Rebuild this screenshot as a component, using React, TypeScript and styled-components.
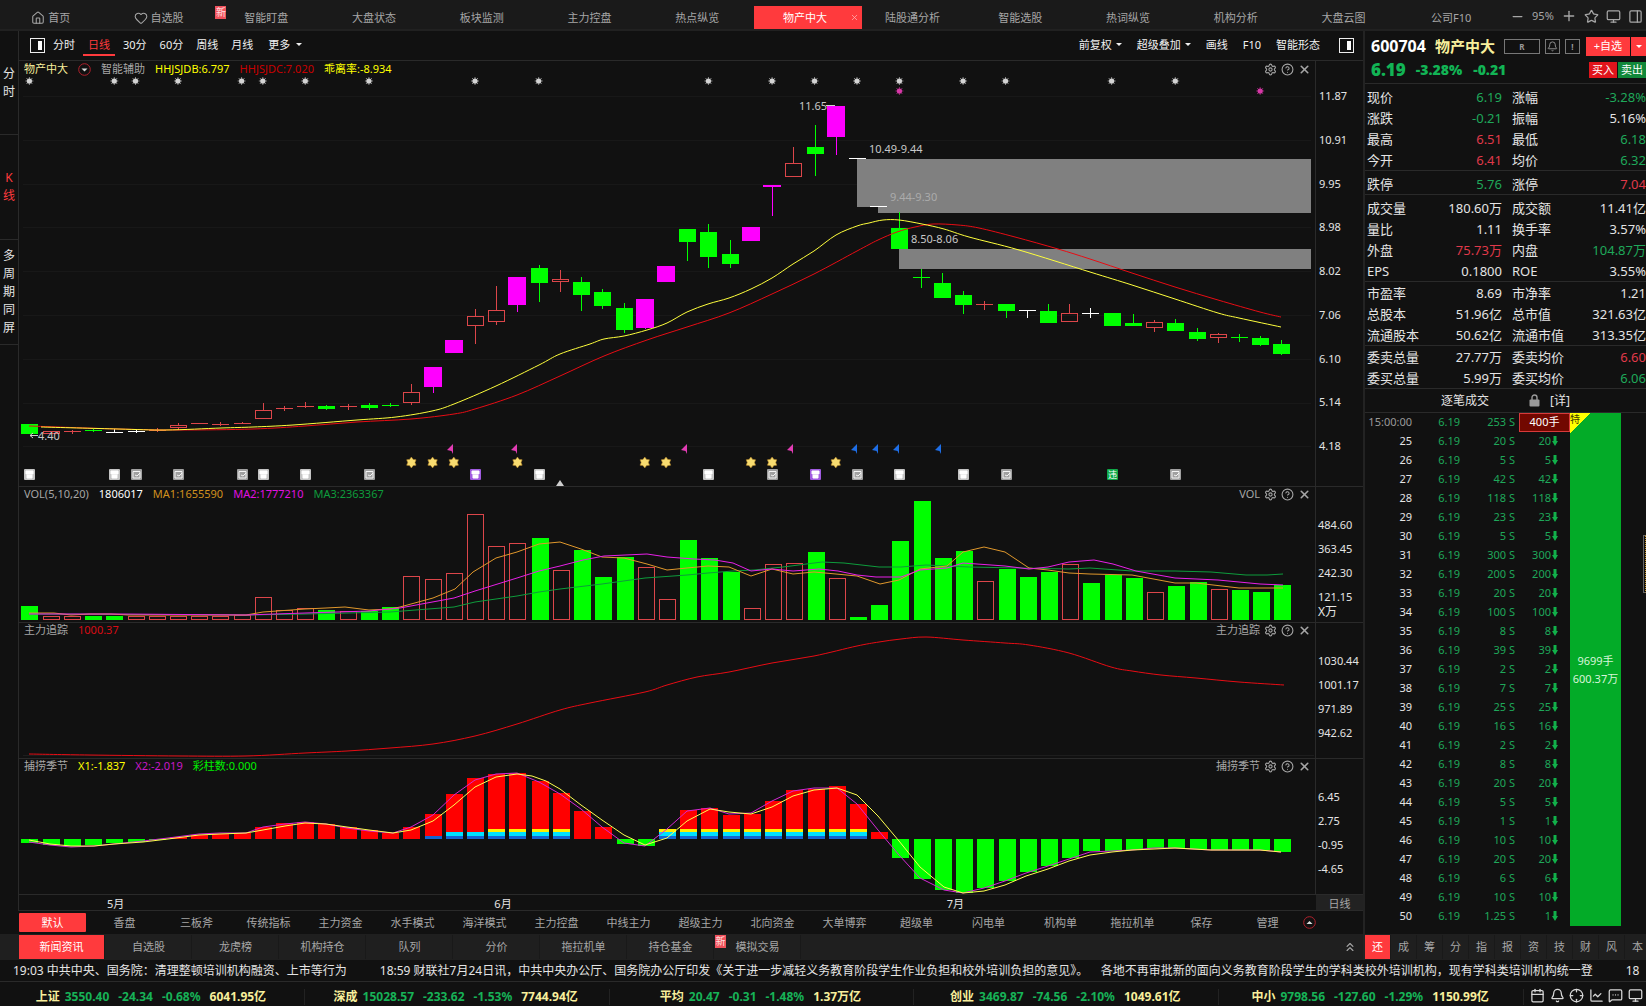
import React from "react";
import styled, { createGlobalStyle } from "styled-components";
import {
  Bell,
  Calendar,
  ChartLine,
  ChevronsUp,
  CircleHelp,
  Crosshair,
  Heart,
  House,
  MessageSquareMore,
  Minus,
  Monitor,
  PanelRight,
  Plus,
  Settings,
  Star,
  X,
} from "lucide-react";

const c = {
  bg: "#111111",
  bar: "#1f1f1f",
  line: "#2a2a2a",
  text: "#e4e4e4",
  muted: "#a6a6a6",
  accent: "#ff3a3d",
  up: "#e0394a",
  down: "#1fa85a",
  cream: "#f8ef9c",
  neon: "#00ff00",
  magenta: "#ff00ff",
  yellow: "#ffff00",
};

const sans = '"Noto Sans", "Noto Sans CJK SC", sans-serif';

const GlobalStyle = createGlobalStyle`
  *, *::before, *::after { box-sizing: border-box; }
  body { margin: 0; background: ${c.bg}; overflow: hidden; }
  button { font: inherit; color: inherit; background: none; border: 0; padding: 0; white-space: nowrap; }
  svg { display: block; flex: none; }
`;

const Page = styled.div`
  display: flex;
  flex-direction: column;
  height: 100vh;
  overflow: hidden;
  background: ${c.bg};
  color: ${c.text};
  font: 11px/14px ${sans};
`;

const TopBar = styled.header`
  display: flex;
  flex: none;
  height: 31px;
  background: #1a1a1a;
  border-bottom: 2px solid #212121;
  color: ${c.muted};
`;

const TopTabs = styled.nav`
  display: flex;
  flex: 1;
  align-items: flex-end;
`;

const TopTab = styled.button<{ $active?: boolean }>`
  position: relative;
  display: flex;
  flex: 1;
  align-items: center;
  justify-content: center;
  gap: 3px;
  height: 23px;
  padding-right: 6px;
  background: ${(p) => (p.$active ? c.accent : "none")};
  color: ${(p) => (p.$active ? "#fff" : "inherit")};
`;

const CloseMark = styled.span`
  position: absolute;
  right: 3px;
  top: 7px;
  color: #ffb3b3;
`;

const NewBadge = styled.span`
  position: absolute;
  left: 0;
  top: 0;
  width: 11px;
  height: 13px;
  background: #f0525c;
  color: #ffdcdc;
  font-size: 10px;
  line-height: 13px;
`;

const WindowTools = styled.div`
  display: flex;
  align-items: center;
  justify-content: space-between;
  width: 138px;
  padding: 3px 3px 0 2px;
`;

const Main = styled.main`
  display: flex;
  flex: 1;
  min-height: 0;
`;

const Workspace = styled.section`
  display: flex;
  flex-direction: column;
  flex: 1;
  min-width: 0;
  border-right: 2px solid #232323;
`;

const WorkArea = styled.div`
  display: flex;
  flex: 1;
  min-height: 0;
`;

const SideNav = styled.nav`
  flex: none;
  width: 19px;
  border-right: 1px solid ${c.line};
`;

const SideTab = styled.button<{ $h: number; $active?: boolean }>`
  display: block;
  width: 18px;
  height: ${(p) => p.$h}px;
  border-bottom: 1px solid ${c.line};
  font-size: 12px;
  line-height: 18px;
  white-space: pre-line;
  text-align: center;
  color: ${(p) => (p.$active ? c.accent : c.text)};
`;

const Charts = styled.div`
  display: flex;
  flex-direction: column;
  flex: 1;
  min-width: 0;
`;

const Toolbar = styled.div`
  display: flex;
  align-items: center;
  height: 30px;
  padding: 0 9px 0 11px;
  border-bottom: 1px solid ${c.line};
  color: #f0f0f0;
`;

const ToolGroup = styled.div<{ $gap: number; $end?: boolean }>`
  display: flex;
  align-items: center;
  gap: ${(p) => p.$gap}px;
  margin-left: ${(p) => (p.$end ? "auto" : "0")};
  margin-right: ${(p) => (p.$end ? "14px" : "0")};
`;

const ToolButton = styled.button<{ $active?: boolean }>`
  display: flex;
  align-items: center;
  gap: 4px;
  height: 20px;
  padding: 0 5px;
  border-bottom: 2px solid ${(p) => (p.$active ? c.accent : "transparent")};
  color: ${(p) => (p.$active ? c.accent : "inherit")};
`;

const MoreButton = styled(ToolButton)`
  gap: 6px;
  margin-left: 2px;
`;

const Caret = styled.i`
  border: 3px solid transparent;
  border-top-color: currentColor;
  border-bottom: 0;
`;

const PanelBox = styled.section<{ $h: number }>`
  display: flex;
  flex: none;
  height: ${(p) => p.$h}px;
  border-bottom: 1px solid ${c.line};
`;

const PlotSide = styled.div`
  display: flex;
  flex-direction: column;
  flex: 1;
  min-width: 0;
  border-right: 1px solid ${c.line};
`;

const Legend = styled.div<{ $main?: boolean }>`
  display: flex;
  align-items: center;
  gap: 10px;
  flex: none;
  height: 16px;
  padding: 0 4px ${(p) => (p.$main ? 0 : 2)}px 5px;
`;

const Tone = styled.span<{ $c: string }>`
  color: ${(p) => p.$c};
`;

const PanelTools = styled.div`
  display: flex;
  align-items: center;
  gap: 4px;
  margin-left: auto;
  color: ${c.muted};
`;

const Plot = styled.svg`
  width: 100%;
  flex: 1;
  min-height: 0;
  overflow: visible;
  font: 11px ${sans};
`;

const Scale = styled.div<{ $spread?: boolean }>`
  display: flex;
  flex-direction: column;
  justify-content: ${(p) => (p.$spread ? "space-between" : "flex-start")};
  flex: none;
  width: 47px;
  padding: ${(p) => (p.$spread ? "28px 0 33px 3px" : "26px 0 0 2px")};
  line-height: ${(p) => (p.$spread ? 14 : 24)}px;
`;

const Unit = styled.span`
  font-size: 12px;
  line-height: 6px;
`;

const TimeAxis = styled.div`
  display: flex;
  flex: none;
  height: 16px;
  border-bottom: 1px solid ${c.line};
  line-height: 17px;
`;

const Months = styled.div`
  display: grid;
  flex: 1;
  grid-template-columns: 88fr 387fr 452fr 369fr;
`;

const Period = styled.div`
  width: 47px;
  background: #222222;
  color: ${c.muted};
  text-align: center;
`;

const TemplateBar = styled.nav`
  display: flex;
  flex: none;
  align-items: center;
  gap: 5px;
  height: 23px;
  padding-left: 19px;
  color: ${c.muted};
`;

const TemplateTab = styled.button<{ $active?: boolean; $narrow?: boolean }>`
  flex: 0 1 ${(p) => (p.$narrow ? 61 : 67)}px;
  height: 19px;
  border-radius: 1px;
  background: ${(p) => (p.$active ? c.accent : "none")};
  color: ${(p) => (p.$active ? "#fff" : "inherit")};
`;

const InfoBar = styled.nav`
  display: flex;
  flex: none;
  align-items: center;
  gap: 1px;
  height: 26px;
  padding: 0 6px 0 19px;
  background: ${c.bar};
  color: ${c.muted};
`;

const InfoTab = styled.button<{ $active?: boolean }>`
  position: relative;
  flex: 0 1 86px;
  height: 24px;
  border-right: 1px solid #191919;
  background: ${(p) => (p.$active ? c.accent : "none")};
  color: ${(p) => (p.$active ? "#fff" : "inherit")};
`;

const PushEnd = styled.button`
  margin-left: auto;
`;

const Quote = styled.aside`
  position: relative;
  display: flex;
  flex-direction: column;
  flex: none;
  width: 281px;
`;

const QuoteHead = styled.div`
  flex: none;
  height: 53px;
  border-bottom: 1px solid ${c.line};
  padding: 3px 0 0 6px;
`;

const HeadRow = styled.div`
  display: flex;
  align-items: center;
  height: 24px;
  font-weight: 700;
  white-space: nowrap;
`;

const Code = styled.h1`
  margin: 0 9px 0 0;
  font-size: 16px;
  line-height: 20px;
  color: #fff;
`;

const StockName = styled.h2`
  margin: 0 9px 0 0;
  font-size: 15px;
  line-height: 20px;
  color: ${c.cream};
`;

const TagBox = styled.button<{ $w: number }>`
  display: flex;
  flex: none;
  align-items: center;
  justify-content: center;
  width: ${(p) => p.$w}px;
  height: 15px;
  margin-right: 5px;
  border: 1px solid #777;
  color: #999;
  font-size: 8px;
  line-height: 13px;
`;

const AddButton = styled.button<{ $w: number }>`
  display: flex;
  flex: none;
  align-items: center;
  justify-content: center;
  width: ${(p) => p.$w}px;
  height: 19px;
  margin-left: 1px;
  background: ${c.accent};
  color: #fff;
  font-weight: 400;
`;

const Price = styled.strong<{ $big?: boolean }>`
  margin-right: ${(p) => (p.$big ? 10 : 11)}px;
  font-size: ${(p) => (p.$big ? 17 : 14)}px;
  color: #12b455;
`;

const TradeButton = styled.button<{ $c: string; $first?: boolean }>`
  width: 28px;
  height: 16px;
  margin-left: ${(p) => (p.$first ? "auto" : "1px")};
  background: ${(p) => p.$c};
  color: #fff;
  font-weight: 400;
`;

const Facts = styled.dl<{ $top: number }>`
  display: grid;
  flex: none;
  grid-template-columns: 62px 73px 62px 1fr;
  grid-auto-rows: 21px;
  align-items: center;
  margin: 0;
  padding: ${(p) => p.$top}px 0 0 2px;
  border-bottom: 1px solid ${c.line};
  font-size: 13px;
  line-height: 20px;
  white-space: nowrap;
`;

const Fact = styled.dt<{ $second?: boolean }>`
  padding-left: ${(p) => (p.$second ? 10 : 0)}px;
`;

const Value = styled.dd<{ $c: string }>`
  margin: 0;
  text-align: right;
  color: ${(p) => p.$c};
`;

const DealsHead = styled.div`
  display: flex;
  align-items: center;
  gap: 10px;
  flex: none;
  height: 24px;
  padding-left: 76px;
  border-bottom: 1px solid ${c.line};
  font-size: 12px;
`;

const LockSlot = styled.span`
  margin-left: 30px;
`;

const Deals = styled.div`
  display: flex;
  flex: 1;
  align-items: flex-start;
`;

const DealTable = styled.table`
  width: 205px;
  table-layout: fixed;
  border-collapse: collapse;
  color: ${c.down};
`;

const DealCell = styled.td<{ $c?: string; $lots?: boolean }>`
  height: 19px;
  padding: 0 0 ${(p) => (p.$lots ? 0 : 2)}px 0;
  text-align: right;
  color: ${(p) => p.$c ?? "inherit"};
`;

const Lots = styled.span`
  display: flex;
  align-items: center;
  justify-content: flex-end;
  gap: 1px;
  padding: 0 12px 2px 0;
`;

const BigLot = styled.span`
  display: block;
  height: 19px;
  margin-left: 4px;
  border: 1px solid #d83a3a;
  background: #720800;
  color: #fff;
  line-height: 16px;
  text-align: center;
`;

const BlockTrade = styled.div`
  position: relative;
  display: flex;
  flex-direction: column;
  align-items: center;
  justify-content: center;
  width: 51px;
  height: 513px;
  background: #03ab28;
  color: #d7f5d9;
  line-height: 18px;
`;

const Corner = styled.span`
  position: absolute;
  left: 0;
  top: 0;
  width: 21px;
  height: 20px;
  background: linear-gradient(135deg, #ffff00 50%, transparent 50%);
  color: #3a3a00;
  font-size: 10px;
  line-height: 12px;
`;

const DrawerHandle = styled.button`
  position: absolute;
  right: 0;
  top: 504px;
  width: 3px;
  height: 58px;
  border: 1px solid #666;
  border-right: 1px dotted #c8952e;
`;

const LetterTabs = styled.nav`
  display: flex;
  flex: none;
  align-items: center;
  height: 26px;
  background: ${c.bar};
  color: ${c.muted};
`;

const LetterTab = styled.button<{ $active?: boolean }>`
  flex: 0 0 26px;
  height: 24px;
  border-right: 1px solid #191919;
  background: ${(p) => (p.$active ? c.accent : "none")};
  color: ${(p) => (p.$active ? "#fff" : "inherit")};
`;

const Ticker = styled.div`
  display: flex;
  flex: none;
  align-items: center;
  gap: 33px;
  height: 22px;
  padding-left: 13px;
  border-bottom: 1px solid ${c.line};
  font-size: 12px;
  line-height: 20px;
  white-space: pre;
`;

const StatusBar = styled.footer`
  display: flex;
  flex: none;
  align-items: center;
  height: 24px;
  padding-top: 5px;
  font-size: 12px;
  font-weight: 700;
`;

const IndexCell = styled.div`
  display: flex;
  flex: 1;
  justify-content: center;
  gap: 9px;
  height: 16px;
  padding-right: 2px;
  border-right: 1px solid #222;
  line-height: 16px;
  color: #17b257;
  white-space: nowrap;
`;

const IndexName = styled.span`
  margin-right: -4px;
  color: ${c.cream};
`;

const StatusIcons = styled.div`
  display: flex;
  justify-content: space-between;
  width: 122px;
  padding: 0 3px 2px 6px;
  color: #d8d8d8;
`;

/* ---------- chart geometry ---------- */

const PLOT_LEFT = 19;
const PLOT_WIDTH = 1296;
const xAt = (i: number) => 29.4 + i * 21.22;

type Kind = "g" | "r" | "m" | "w";
const tint: Record<Kind, string> = { g: c.neon, r: "#dc464a", m: c.magenta, w: "#ffffff" };

/* kind, high, body top, body bottom, low */
type Candle = [Kind, number, number, number, number];
const candles: Candle[] = [
  ["g", 424, 424, 434, 434], ["r", 431, 431, 433, 434], ["r", 430, 431, 431, 434], ["g", 428, 430, 430, 432],
  ["w", 429, 432, 432, 432], ["w", 430, 431, 431, 433], ["r", 428, 430, 430, 432], ["r", 423, 425, 427, 430],
  ["r", 423, 423, 423, 424], ["r", 422, 424, 424, 426], ["r", 422, 423, 423, 424], ["r", 403, 410, 418, 418],
  ["r", 406, 408, 408, 411], ["r", 402, 406, 406, 408], ["g", 405, 406, 409, 410], ["r", 404, 406, 406, 410],
  ["g", 403, 405, 408, 410], ["g", 403, 405, 405, 407], ["r", 384, 392, 402, 405], ["m", 367, 367, 387, 393],
  ["m", 340, 340, 353, 353], ["r", 309, 316, 325, 344], ["r", 286, 310, 321, 325], ["m", 277, 277, 305, 312],
  ["g", 265, 268, 283, 302], ["r", 270, 279, 281, 292], ["g", 277, 282, 295, 311], ["g", 289, 292, 306, 309],
  ["g", 303, 308, 330, 333], ["m", 299, 299, 328, 329], ["m", 266, 266, 282, 282], ["g", 229, 229, 242, 261],
  ["g", 224, 232, 257, 268], ["g", 240, 254, 264, 268], ["m", 227, 227, 241, 241], ["m", 185, 185, 187, 216],
  ["r", 147, 163, 176, 176], ["g", 125, 147, 154, 176], ["m", 106, 106, 137, 155], ["w", 158, 158, 158, 158],
  ["w", 206, 206, 206, 206], ["g", 212, 228, 249, 249], ["g", 269, 277, 277, 288], ["g", 273, 283, 298, 298],
  ["g", 291, 295, 305, 314], ["r", 301, 304, 304, 310], ["g", 304, 304, 311, 318], ["w", 310, 310, 310, 318],
  ["g", 304, 311, 323, 323], ["r", 304, 313, 321, 321], ["w", 308, 313, 313, 318], ["g", 313, 313, 326, 326],
  ["g", 314, 323, 326, 326], ["r", 320, 322, 327, 332], ["g", 319, 323, 331, 331], ["g", 328, 332, 339, 341],
  ["r", 333, 334, 337, 343], ["g", 334, 337, 337, 342], ["g", 336, 338, 345, 346], ["g", 340, 344, 354, 355],
];

const volumes: [Kind, number][] = [
  ["g", 606], ["r", 616], ["r", 616], ["g", 616], ["g", 616], ["r", 616], ["r", 616], ["r", 616], ["r", 616], ["r", 616],
  ["r", 615], ["r", 597], ["r", 610], ["r", 608], ["g", 610], ["r", 611], ["g", 611], ["g", 607], ["r", 576], ["r", 579],
  ["r", 573], ["r", 514], ["r", 546], ["r", 543], ["g", 538], ["r", 570], ["g", 550], ["g", 577], ["g", 557], ["r", 567],
  ["r", 599], ["g", 540], ["g", 558], ["g", 572], ["r", 608], ["r", 564], ["r", 563], ["g", 552], ["r", 578], ["g", 617],
  ["g", 605], ["g", 541], ["g", 501], ["g", 558], ["g", 551], ["r", 581], ["g", 569], ["g", 577], ["g", 572], ["r", 564],
  ["g", 583], ["g", 575], ["g", 578], ["r", 592], ["g", 586], ["g", 582], ["r", 589], ["g", 590], ["g", 592], ["g", 585],
];

const ZERO = 839;
const season = [
  843, 845, 846, 845, 843, 842, 840, 837, 835, 834, 833, 827, 823, 822, 824, 827, 830, 833, 827, 814,
  794, 778, 774, 773, 781, 793, 811, 827, 844, 846, 829, 810, 808, 815, 814, 801, 790, 789, 786, 804,
  832, 858, 879, 890, 893, 888, 881, 872, 866, 858, 851, 851, 850, 848, 848, 849, 850, 850, 850, 852,
];
const stripeLevel = (i: number) => {
  if (i === 19) return 1;
  if (i === 20 || i === 21) return 2;
  if ((i >= 22 && i <= 25) || (i >= 30 && i <= 39)) return 3;
  return 0;
};

const hhb = "41,427 118,429 166,430 221,428 253,427 293,425 357,420 396,417 432,411 454,404 496,386 539,365 560,354 590,344 604,339 624,336 647,330 667,323 687,312 708,304 729,298 751,289 772,278 793,264 814,251 836,235 857,226 869,223 883,220 899,220 922,224 944,229 969,237 1019,250 1090,272 1132,285 1175,299 1218,313 1239,318 1281,327";
const hhc = "29,426 118,429 179,430 253,429 305,426 357,422 411,419 454,414 475,409 517,395 560,376 604,356 647,340 687,327 729,313 772,294 814,274 857,251 878,240 897,232 915,227 933,224 958,225 979,228 1015,237 1058,249 1090,259 1132,273 1175,287 1218,300 1260,312 1281,317";
const ma5 = "29,613 54,613 71,615 89,614 111,614 129,615 246,615 263,612 305,609 326,608 345,607 369,610 390,609 400,607 433,598 455,589 473,572 496,558 517,552 539,544 560,542 581,549 602,557 624,558 647,564 667,570 687,568 708,566 729,567 751,576 772,569 793,574 814,572 836,574 857,576 880,584 899,580 920,569 947,566 963,552 984,547 1005,552 1029,568 1048,570 1069,573 1090,574 1132,575 1175,583 1196,583 1239,588 1283,588";
const ma10 = "29,614 121,614 246,615 305,613 369,611 400,608 454,598 475,591 517,578 539,571 560,566 583,560 604,556 647,554 667,557 694,559 715,560 733,563 751,571 772,569 793,571 819,569 838,571 857,575 876,577 901,577 920,570 947,568 963,563 1005,566 1029,569 1048,567 1069,562 1094,560 1113,564 1136,571 1175,578 1218,580 1260,584 1283,585";
const ma20 = "29,614 246,615 305,614 390,612 454,607 475,602 517,596 539,592 560,589 602,584 645,578 687,575 708,573 733,571 754,570 783,567 822,562 844,563 879,567 901,567 926,565 969,567 1019,568 1069,569 1090,568 1132,571 1175,571 1211,572 1246,575 1267,575 1283,574";
const track = "29,754 89,755 179,756 246,756 305,753 347,751 390,748 433,744 475,736 517,724 560,710 590,703 645,692 667,685 697,677 729,672 772,663 814,656 857,646 879,642 901,639 926,637 963,640 1005,643 1029,645 1069,653 1111,667 1132,671 1161,675 1196,678 1239,682 1284,685";
const x1 = "29,840 50,844 71,846 94,846 114,844 143,842 168,839 199,835 220,834 246,833 263,830 285,826 305,823 326,824 347,827 369,830 393,833 411,830 433,821 454,805 475,787 496,777 517,774 532,776 546,781 560,789 581,805 602,820 624,835 645,845 667,838 687,821 710,809 729,812 751,814 772,807 793,796 814,790 837,788 857,795 878,816 899,841 920,867 944,887 963,893 984,891 1005,885 1026,876 1048,869 1069,861 1090,855 1112,852 1132,850 1154,849 1175,848 1211,850 1239,850 1260,850 1281,852";
const x2 = "29,842 50,845 71,847 94,846 114,844 143,841 168,838 199,834 220,833 246,833 263,827 285,824 305,822 326,824 347,828 369,831 393,833 411,827 433,815 454,795 475,780 496,774 517,773 539,782 560,794 581,809 602,827 624,843 645,846 667,829 687,811 710,808 729,814 751,813 772,801 793,791 814,788 837,788 857,804 878,830 899,855 920,878 944,890 963,893 984,888 1005,881 1026,873 1048,866 1069,859 1090,852 1112,851 1132,850 1154,848 1175,848 1211,850 1239,850 1260,850 1281,852";

/* Catmull-Rom smoothing of a point list */
function smooth(list: string) {
  const p = list.split(" ").map((s) => s.split(",").map(Number));
  let d = `M${p[0][0]} ${p[0][1]}`;
  for (let i = 0; i < p.length - 1; i++) {
    const a = p[Math.max(0, i - 1)];
    const b = p[i];
    const e = p[i + 1];
    const f = p[Math.min(p.length - 1, i + 2)];
    d += `C${b[0] + (e[0] - a[0]) / 6} ${b[1] + (e[1] - a[1]) / 6} ${e[0] - (f[0] - b[0]) / 6} ${e[1] - (f[1] - b[1]) / 6} ${e[0]} ${e[1]}`;
  }
  return d;
}

function Curve({ points, color, straight }: { points: string; color: string; straight?: boolean }) {
  return straight ? (
    <polyline points={points} fill="none" stroke={color} />
  ) : (
    <path d={smooth(points)} fill="none" stroke={color} />
  );
}

function CandleMark({ data, i }: { data: Candle; i: number }) {
  const [kind, high, top, bottom, low] = data;
  const x = Math.round(xAt(i));
  const color = tint[kind];
  const half = kind === "m" ? 9 : 8;
  const hollow = kind === "r" && bottom > top;
  return (
    <g shapeRendering="crispEdges" stroke={color} strokeWidth="1">
      {high < top && <line x1={x + 0.5} x2={x + 0.5} y1={high} y2={top} />}
      {low > bottom && <line x1={x + 0.5} x2={x + 0.5} y1={bottom} y2={low} />}
      {bottom === top ? (
        <line x1={x - 8} x2={x + 9} y1={top + 0.5} y2={top + 0.5} />
      ) : hollow ? (
        <rect x={x - 7.5} y={top + 0.5} width={16} height={bottom - top} fill="none" />
      ) : (
        <rect x={x - half} y={top} width={half * 2 + (kind === "m" ? 0 : 1)} height={bottom - top} fill={color} stroke="none" />
      )}
    </g>
  );
}

function Spark({ i, y, color }: { i: number; y: number; color: string }) {
  const x = xAt(i);
  return (
    <g>
      <circle cx={x} cy={y} r="2.6" fill={color} />
      <path d={`M${x - 4} ${y}h8M${x} ${y - 4}v8M${x - 3} ${y - 3}l6 6M${x + 3} ${y - 3}l-6 6`} stroke={color} strokeWidth="1" opacity="0.6" />
    </g>
  );
}

function GoldStar({ i }: { i: number }) {
  const x = xAt(i);
  const pts = Array.from({ length: 12 }, (_, k) => {
    const r = k % 2 ? 3.6 : 5.4;
    const a = (Math.PI / 6) * k - Math.PI / 2;
    return `${x + r * Math.cos(a)},${462.5 + r * Math.sin(a)}`;
  }).join(" ");
  return <polygon points={pts} fill="#f8dc70" stroke="#b98a2a" strokeWidth="0.6" />;
}

function Flag({ x, color }: { x: number; color: string }) {
  return <path d={`M${x - 4} 450l6-6v10l-1.500-3z`} fill={color} />;
}

function Notice({ i, kind }: { i: number; kind: "doc" | "note" | "vip" | "breach" }) {
  const x = Math.round(xAt(i)) - 5;
  const y = 469;
  const fill = { doc: "#c4c4c4", note: "#a0a0a0", vip: "#a05be0", breach: "#10a848" }[kind];
  return (
    <g>
      <rect x={x} y={y} width="11" height="11" rx="1" fill={fill} />
      {kind === "breach" ? (
        <text x={x + 1} y={y + 9} fontSize="9" fill="#fff">违</text>
      ) : kind === "note" ? (
        <path d={`M${x + 2} ${y + 2.5}h7v6.500h-7zM${x + 4} ${y + 6}l2 1 3-3`} fill="none" stroke="#f4f4f4" />
      ) : (
        <path d={`M${x + 2} ${y + 2}h7v3h-7zM${x + 3} ${y + 6}h5v3h-5z`} fill="#fff" stroke="#fff" />
      )}
    </g>
  );
}

const noticeIndex: [number, "doc" | "note" | "vip" | "breach"][] = [
  [0, "doc"], [4, "doc"], [5, "note"], [7, "note"], [10, "note"], [11, "doc"], [13, "doc"], [16, "note"], [21, "vip"], [24, "doc"],
  [32, "doc"], [35, "note"], [37, "vip"], [39, "note"], [41, "doc"], [44, "doc"], [46, "note"], [51, "breach"], [54, "note"],
];

const priceScale = ["11.87", "10.91", "9.95", "8.98", "8.02", "7.06", "6.10", "5.14", "4.18"];

function PricePlot() {
  return (
    <Plot viewBox={`${PLOT_LEFT} 77 ${PLOT_WIDTH} 408`} preserveAspectRatio="xMinYMin meet">
      {priceScale.map((p, k) => (
        <line key={p} x1="23" x2="1311" y1={Math.round(96 + k * 43.8) + 0.5} y2={Math.round(96 + k * 43.8) + 0.5} stroke="#181818" />
      ))}
      <path d="M857 159H1311V213H878V207H857Z" fill="#808080" />
      <rect x="899" y="249" width="412" height="20" fill="#808080" />
      {[0, 4, 5, 7, 10, 11, 13, 16, 21, 24, 32, 35, 37, 39, 41, 44, 46, 51, 54].map((i) => (
        <Spark key={i} i={i} y={81} color="#d4d4d4" />
      ))}
      <Spark i={41} y={91} color="#d838a8" />
      <Spark i={58} y={91} color="#d838a8" />
      {candles.map((d, i) => (
        <CandleMark key={i} data={d} i={i} />
      ))}
      <Curve points={hhc} color="#e80c14" />
      <Curve points={hhb} color="#ffff3c" />
      <path d="M826 105.500h9M30 435.500h8M33 433l-3 2.500 3 2.500" stroke="#d0d0d0" fill="none" />
      <g fill="#c8c8c8">
        <text x="799" y="110">11.65</text>
        <text x="869" y="153">10.49-9.44</text>
        <text x="890" y="201" fill="#ababab">9.44-9.30</text>
        <text x="911" y="243">8.50-8.06</text>
        <text x="38" y="440">4.40</text>
      </g>
      {[451, 515, 685, 791].map((x) => (
        <Flag key={x} x={x} color="#e23cb4" />
      ))}
      {[855, 876, 897, 939].map((x) => (
        <Flag key={x} x={x} color="#1e6ee6" />
      ))}
      {[18, 19, 20, 23, 29, 30, 34, 35, 38].map((i) => (
        <GoldStar key={i} i={i} />
      ))}
      {noticeIndex.map(([i, kind]) => (
        <Notice key={i} i={i} kind={kind} />
      ))}
      <path d="M560 480l4 6h-8z" fill="#cfcfcf" />
    </Plot>
  );
}

function VolumePlot() {
  return (
    <Plot viewBox={`${PLOT_LEFT} 503 ${PLOT_WIDTH} 118`} preserveAspectRatio="xMinYMin meet">
      <g shapeRendering="crispEdges">
        {volumes.map(([kind, top], i) => {
          const x = Math.round(xAt(i) + (i > 23 ? 1 : 0)) - 8;
          return kind === "g" ? (
            <rect key={i} x={x} y={top} width="17" height={620 - top} fill={c.neon} />
          ) : (
            <rect key={i} x={x + 0.5} y={top + 0.5} width="16" height={619 - top} fill="none" stroke={tint.r} />
          );
        })}
      </g>
      <Curve points={ma20} color="#0e9c3c" straight />
      <Curve points={ma5} color="#e0982c" straight />
      <Curve points={ma10} color="#e820e8" straight />
    </Plot>
  );
}

function TrackPlot() {
  return (
    <Plot viewBox={`${PLOT_LEFT} 639 ${PLOT_WIDTH} 118`} preserveAspectRatio="xMinYMin meet">
      <line x1="23" x2="1314" y1="755.5" y2="755.5" stroke="#1d1d1d" />
      <Curve points={track} color="#e80c14" />
    </Plot>
  );
}

function SeasonPlot() {
  const stripes = [
    { y: 836, h: 3, color: "#1464d2" },
    { y: 832, h: 4, color: "#00e0ff" },
    { y: 829, h: 3, color: "#ffee00" },
  ];
  return (
    <Plot viewBox={`${PLOT_LEFT} 775 ${PLOT_WIDTH} 118`} preserveAspectRatio="xMinYMin meet">
      <g shapeRendering="crispEdges">
        {season.map((v, i) => {
          const x = Math.round(xAt(i) + (i > 23 ? 1 : 0)) - 8;
          return (
            <g key={i}>
              <rect x={x} y={Math.min(v, ZERO)} width="17" height={Math.abs(v - ZERO)} fill={v < ZERO ? "#ff0000" : c.neon} />
              {stripes.slice(0, stripeLevel(i)).map((s) => (
                <rect key={s.y} x={x} y={s.y} width="17" height={s.h} fill={s.color} />
              ))}
            </g>
          );
        })}
      </g>
      <Curve points={x2} color="#d428d4" straight />
      <Curve points={x1} color="#ffff50" straight />
    </Plot>
  );
}

function Tools({ label }: { label?: string }) {
  return (
    <PanelTools>
      {label}
      <button aria-label="设置"><Settings size={13} strokeWidth={2} /></button>
      <button aria-label="帮助"><CircleHelp size={13} strokeWidth={2} /></button>
      <button aria-label="关闭"><X size={13} strokeWidth={3} /></button>
    </PanelTools>
  );
}

function LayoutIcon() {
  return (
    <svg width="15" height="15" viewBox="0 0 15 15">
      <rect x="0.5" y="0.5" width="14" height="14" fill="none" stroke="#eee" />
      <rect x="8" y="3" width="4" height="9" fill="#fff" />
    </svg>
  );
}

function RoundArrow({ up }: { up?: boolean }) {
  return (
    <svg width="13" height="13" viewBox="0 0 13 13">
      <circle cx="6.5" cy="6.500" r="5.8" fill="none" stroke="#b0202c" />
      <path d={up ? "M3.500 8L6.500 5L9.500 8Z" : "M3.500 5.500L6.500 8.500L9.500 5.500Z"} fill="#ddd" />
    </svg>
  );
}

function DownArrow() {
  return (
    <svg width="6" height="10" viewBox="0 0 6 10">
      <path d="M1.500 0h3v5h1.500l-3 5-3-5h1.500z" fill="#12b04a" />
    </svg>
  );
}

function Padlock() {
  return (
    <svg width="11" height="13" viewBox="0 0 11 13">
      <path d="M3 6V3.500a2.500 2.500 0 0 1 5 0V6" fill="none" stroke="#9a9a9a" strokeWidth="1.4" />
      <rect x="0.5" y="5.500" width="10" height="7" rx="1" fill="#9a9a9a" />
    </svg>
  );
}

const topTabs = ["首页", "自选股", "智能盯盘", "大盘状态", "板块监测", "主力控盘", "热点纵览", "物产中大", "陆股通分析", "智能选股", "热词纵览", "机构分析", "大盘云图", "公司F10"];
const templates = ["默认", "香盘", "三板斧", "传统指标", "主力资金", "水手模式", "海洋模式", "主力控盘", "中线主力", "超级主力", "北向资金", "大单博弈", "超级单", "闪电单", "机构单", "拖拉机单", "保存", "管理"];
const infoTabs = ["新闻资讯", "自选股", "龙虎榜", "机构持仓", "队列", "分价", "拖拉机单", "持仓基金", "模拟交易"];
const letters = ["还", "成", "筹", "分", "指", "报", "资", "技", "财", "风", "本"];

type Pair = [string, string, string, string, string, string];
const W = c.text;
const factGroups: { top: number; rows: Pair[] }[] = [
  { top: 2, rows: [
    ["现价", "6.19", c.down, "涨幅", "-3.28%", c.down],
    ["涨跌", "-0.21", c.down, "振幅", "5.16%", W],
    ["最高", "6.51", c.up, "最低", "6.18", c.down],
    ["今开", "6.41", c.up, "均价", "6.32", c.down],
  ] },
  { top: 2, rows: [["跌停", "5.76", c.down, "涨停", "7.04", c.up]] },
  { top: 2, rows: [
    ["成交量", "180.60万", W, "成交额", "11.41亿", W],
    ["量比", "1.11", W, "换手率", "3.57%", W],
    ["外盘", "75.73万", c.up, "内盘", "104.87万", c.down],
    ["EPS", "0.1800", W, "ROE", "3.55%", W],
  ] },
  { top: 0, rows: [
    ["市盈率", "8.69", W, "市净率", "1.21", W],
    ["总股本", "51.96亿", W, "总市值", "321.63亿", W],
    ["流通股本", "50.62亿", W, "流通市值", "313.35亿", W],
  ] },
  { top: 0, rows: [
    ["委卖总量", "27.77万", W, "委卖均价", "6.60", c.up],
    ["委买总量", "5.99万", W, "委买均价", "6.06", c.down],
  ] },
];

const deals: [string, string, string][] = [
  ["15:00:00", "253", "400手"], ["25", "20", "20"], ["26", "5", "5"], ["27", "42", "42"], ["28", "118", "118"],
  ["29", "23", "23"], ["30", "5", "5"], ["31", "300", "300"], ["32", "200", "200"], ["33", "20", "20"],
  ["34", "100", "100"], ["35", "8", "8"], ["36", "39", "39"], ["37", "2", "2"], ["38", "7", "7"],
  ["39", "25", "25"], ["40", "16", "16"], ["41", "2", "2"], ["42", "8", "8"], ["43", "20", "20"],
  ["44", "5", "5"], ["45", "1", "1"], ["46", "10", "10"], ["47", "20", "20"], ["48", "6", "6"],
  ["49", "10", "10"], ["50", "1.25", "1"],
];

const indexes = [
  ["上证", "3550.40", "-24.34", "-0.68%", "6041.95亿"],
  ["深成", "15028.57", "-233.62", "-1.53%", "7744.94亿"],
  ["平均", "20.47", "-0.31", "-1.48%", "1.37万亿"],
  ["创业", "3469.87", "-74.56", "-2.10%", "1049.61亿"],
  ["中小", "9798.56", "-127.60", "-1.29%", "1150.99亿"],
];

export default function App() {
  return (
    <Page>
      <GlobalStyle />
      <TopBar>
        <TopTabs>
          {topTabs.map((t, i) => (
            <TopTab key={t} $active={i === 7}>
              {i === 0 && <House size={14} strokeWidth={1.8} />}
              {i === 1 && <Heart size={14} strokeWidth={1.8} />}
              {i === 2 && <NewBadge>新</NewBadge>}
              {t}
              {i === 7 && <CloseMark><X size={9} /></CloseMark>}
            </TopTab>
          ))}
        </TopTabs>
        <WindowTools>
          <button aria-label="缩小"><Minus size={15} /></button>
          95%
          <button aria-label="放大"><Plus size={16} /></button>
          <button aria-label="收藏"><Star size={15} /></button>
          <button aria-label="屏幕"><Monitor size={15} /></button>
          <button aria-label="布局"><PanelRight size={15} /></button>
        </WindowTools>
      </TopBar>

      <Main>
        <Workspace>
          <WorkArea>
            <SideNav>
              <SideTab $h={104}>{"分\n时"}</SideTab>
              <SideTab $h={105} $active>{"K\n线"}</SideTab>
              <SideTab $h={105}>{"多\n周\n期\n同\n屏"}</SideTab>
            </SideNav>
            <Charts>
              <Toolbar>
                <ToolGroup $gap={3}>
                  <LayoutIcon />
                  <ToolButton>分时</ToolButton>
                  <ToolButton $active>日线</ToolButton>
                  <ToolButton>30分</ToolButton>
                  <ToolButton>60分</ToolButton>
                  <ToolButton>周线</ToolButton>
                  <ToolButton>月线</ToolButton>
                  <MoreButton>更多<Caret /></MoreButton>
                </ToolGroup>
                <ToolGroup $gap={5} $end>
                  <ToolButton>前复权<Caret /></ToolButton>
                  <ToolButton>超级叠加<Caret /></ToolButton>
                  <ToolButton>画线</ToolButton>
                  <ToolButton>F10</ToolButton>
                  <ToolButton>智能形态</ToolButton>
                </ToolGroup>
                <LayoutIcon />
              </Toolbar>

              <PanelBox $h={426}>
                <PlotSide>
                  <Legend $main>
                    <Tone $c={c.cream}>物产中大</Tone>
                    <RoundArrow />
                    <Tone $c={c.muted}>智能辅助</Tone>
                    <Tone $c={c.yellow}>HHJSJDB:6.797</Tone>
                    <Tone $c="#c80000">HHJSJDC:7.020</Tone>
                    <Tone $c={c.yellow}>乖离率:-8.934</Tone>
                    <Tools />
                  </Legend>
                  <PricePlot />
                </PlotSide>
                <Scale $spread>{priceScale.map((p) => <span key={p}>{p}</span>)}</Scale>
              </PanelBox>

              <PanelBox $h={136}>
                <PlotSide>
                  <Legend>
                    <Tone $c={c.muted}>VOL(5,10,20)</Tone>
                    <Tone $c="#fff">1806017</Tone>
                    <Tone $c="#d0901e">MA1:1655590</Tone>
                    <Tone $c="#e010e0">MA2:1777210</Tone>
                    <Tone $c="#0e9c3c">MA3:2363367</Tone>
                    <Tools label="VOL" />
                  </Legend>
                  <VolumePlot />
                </PlotSide>
                <Scale>
                  <span>484.60</span><span>363.45</span><span>242.30</span><span>121.15</span><Unit>X万</Unit>
                </Scale>
              </PanelBox>

              <PanelBox $h={136}>
                <PlotSide>
                  <Legend>
                    <Tone $c={c.muted}>主力追踪</Tone>
                    <Tone $c="#d80c14">1000.37</Tone>
                    <Tools label="主力追踪" />
                  </Legend>
                  <TrackPlot />
                </PlotSide>
                <Scale><span>1030.44</span><span>1001.17</span><span>971.89</span><span>942.62</span></Scale>
              </PanelBox>

              <PanelBox $h={136}>
                <PlotSide>
                  <Legend>
                    <Tone $c={c.muted}>捕捞季节</Tone>
                    <Tone $c={c.yellow}>X1:-1.837</Tone>
                    <Tone $c="#c818c8">X2:-2.019</Tone>
                    <Tone $c="#00f000">彩柱数:0.000</Tone>
                    <Tools label="捕捞季节" />
                  </Legend>
                  <SeasonPlot />
                </PlotSide>
                <Scale><span>6.45</span><span>2.75</span><span>-0.95</span><span>-4.65</span></Scale>
              </PanelBox>

              <TimeAxis>
                <Months><span /><span>5月</span><span>6月</span><span>7月</span></Months>
                <Period>日线</Period>
              </TimeAxis>
            </Charts>
          </WorkArea>

          <TemplateBar>
            {templates.map((t, i) => (
              <TemplateTab key={t} $active={i === 0} $narrow={i > 15}>{t}</TemplateTab>
            ))}
            <button aria-label="展开"><RoundArrow up /></button>
          </TemplateBar>
          <InfoBar>
            {infoTabs.map((t, i) => (
              <InfoTab key={t} $active={i === 0}>
                {i === 8 && <NewBadge>新</NewBadge>}
                {t}
              </InfoTab>
            ))}
            <PushEnd aria-label="收起"><ChevronsUp size={14} /></PushEnd>
          </InfoBar>
        </Workspace>

        <Quote>
          <QuoteHead>
            <HeadRow>
              <Code>600704</Code>
              <StockName>物产中大</StockName>
              <TagBox $w={36}>R</TagBox>
              <TagBox $w={15} aria-label="提醒"><Bell size={11} /></TagBox>
              <TagBox $w={15}>!</TagBox>
              <AddButton $w={44}>+自选</AddButton>
              <AddButton $w={16} aria-label="更多自选"><Caret /></AddButton>
            </HeadRow>
            <HeadRow>
              <Price $big>6.19</Price>
              <Price>-3.28%</Price>
              <Price>-0.21</Price>
              <TradeButton $c="#e0141c" $first>买入</TradeButton>
              <TradeButton $c="#12883a">卖出</TradeButton>
            </HeadRow>
          </QuoteHead>
          {factGroups.map((g) => (
            <Facts key={g.rows[0][0]} $top={g.top}>
              {g.rows.map((r) => (
                <React.Fragment key={r[0]}>
                  <Fact>{r[0]}</Fact>
                  <Value $c={r[2]}>{r[1]}</Value>
                  <Fact $second>{r[3]}</Fact>
                  <Value $c={r[5]}>{r[4]}</Value>
                </React.Fragment>
              ))}
            </Facts>
          ))}
          <DealsHead>
            逐笔成交
            <LockSlot><Padlock /></LockSlot>
            <button>[详]</button>
          </DealsHead>
          <Deals>
            <DealTable>
              <colgroup>
                <col width="47" /><col width="48" /><col width="55" /><col width="55" />
              </colgroup>
              <tbody>
                {deals.map(([time, vol, lots], i) => (
                  <tr key={time}>
                    <DealCell $c={i === 0 ? "#9a9a9a" : W}>{time}</DealCell>
                    <DealCell>6.19</DealCell>
                    <DealCell>{vol} S</DealCell>
                    <DealCell $lots>
                      {i === 0 ? <BigLot>{lots}</BigLot> : <Lots>{lots}<DownArrow /></Lots>}
                    </DealCell>
                  </tr>
                ))}
              </tbody>
            </DealTable>
            <BlockTrade>
              <Corner>特</Corner>
              <span>9699手</span>
              <span>600.37万</span>
            </BlockTrade>
          </Deals>
          <DrawerHandle aria-label="展开侧栏" />
          <LetterTabs>
            {letters.map((t, i) => (
              <LetterTab key={t} $active={i === 0}>{t}</LetterTab>
            ))}
          </LetterTabs>
        </Quote>
      </Main>

      <Ticker>
        <span>19:03 中共中央、国务院：清理整顿培训机构融资、上市等行为</span>
        <span>18:59 财联社7月24日讯，中共中央办公厅、国务院办公厅印发《关于进一步减轻义务教育阶段学生作业负担和校外培训负担的意见》。    各地不再审批新的面向义务教育阶段学生的学科类校外培训机构，现有学科类培训机构统一登</span>
        <span>18</span>
      </Ticker>
      <StatusBar>
        {indexes.map(([name, last, diff, pct, amount]) => (
          <IndexCell key={name}>
            <IndexName>{name}</IndexName>
            <span>{last}</span>
            <span>{diff}</span>
            <span>{pct}</span>
            <Tone $c={c.cream}>{amount}</Tone>
          </IndexCell>
        ))}
        <StatusIcons>
          <Calendar size={15} />
          <Bell size={15} />
          <Crosshair size={15} />
          <ChartLine size={15} />
          <MessageSquareMore size={15} />
          <Monitor size={15} />
        </StatusIcons>
      </StatusBar>
    </Page>
  );
}
